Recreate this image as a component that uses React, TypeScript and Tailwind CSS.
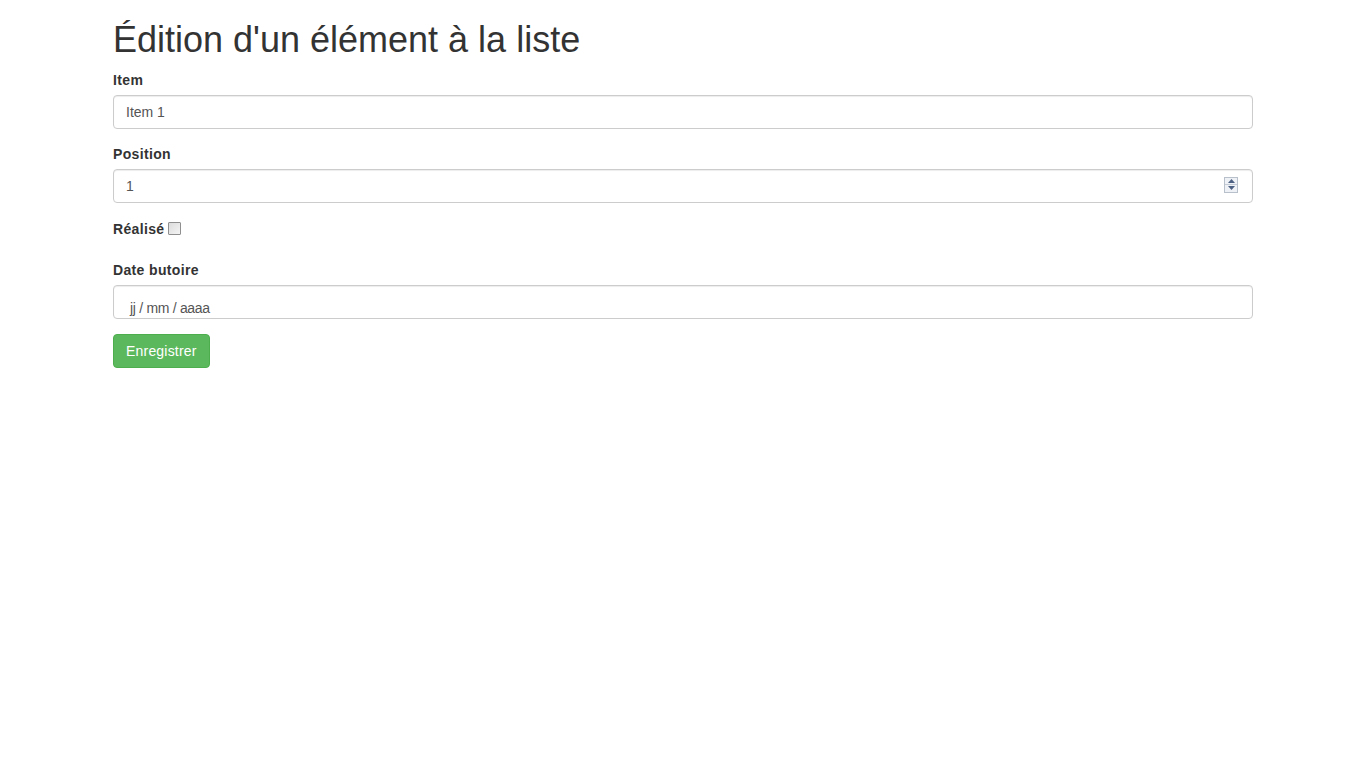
const FONT = "font-['Liberation_Sans',Arial,sans-serif]"

const inputCls =
  'block w-full h-[34px] px-3 py-[6px] text-[14px] leading-[20px] text-[#555] bg-white border border-[#ccc] rounded-[4px] shadow-[inset_0_1px_1px_rgba(0,0,0,0.075)] outline-none'

const labelCls = 'inline-block font-bold mb-[5px] tracking-[0.35px]'

function Spinner() {
  return (
    <div className="absolute right-[15px] top-[8px] w-[14px] h-[16px] flex flex-col border border-[#b8c0cc] bg-[#eef1f5]">
      <div className="flex-1 flex items-center justify-center border-b border-[#c6ccd6]">
        <svg width="7" height="4" viewBox="0 0 7 4">
          <path d="M0 4 L3.5 0 L7 4 Z" fill="#4d6185" />
        </svg>
      </div>
      <div className="flex-1 flex items-center justify-center">
        <svg width="7" height="4" viewBox="0 0 7 4">
          <path d="M0 0 L3.5 4 L7 0 Z" fill="#4d6185" />
        </svg>
      </div>
    </div>
  )
}

export default function App() {
  return (
    <div className={`${FONT} bg-white min-h-screen text-[14px] leading-[20px] text-[#333]`}>
      <div className="w-[1170px] mx-auto px-[15px]">
        <h1 className="text-[36px] leading-[1.1] font-normal mt-5 mb-[10px]">Édition d'un élément à la liste</h1>
        <form onSubmit={(e) => e.preventDefault()}>
          <div className="mb-[15px]">
            <label className={labelCls}>Item</label>
            <input className={inputCls} defaultValue="Item 1" />
          </div>
          <div className="mb-[15px]">
            <label className={labelCls}>Position</label>
            <div className="relative">
              <input className={inputCls} defaultValue="1" />
              <Spinner />
            </div>
          </div>
          <div className="mb-[16px] pt-px">
            <label className="inline-flex items-center font-bold mb-[5px] tracking-[0.35px]">
              Réalisé
              <span className="ml-1 inline-block w-[13px] h-[13px] border border-[#8f8f8f] bg-gradient-to-br from-[#dcdcdc] to-[#f4f4f4] rounded-[1px]" />
            </label>
          </div>
          <div className="mb-[15px]">
            <label className={labelCls}>Date butoire</label>
            <div className="w-full h-[34px] pl-[16px] pt-[13px] text-[14px] leading-[18px] text-[#555] bg-white border border-[#ccc] rounded-[4px] shadow-[inset_0_1px_1px_rgba(0,0,0,0.075)] overflow-hidden tracking-[-0.3px]">
              jj / mm / aaaa
            </div>
          </div>
          <button
            type="submit"
            className="inline-block px-3 py-[6px] text-[14px] leading-[20px] tracking-[0.2px] text-white bg-[#5cb85c] border border-[#4cae4c] rounded-[4px]"
          >
            Enregistrer
          </button>
        </form>
      </div>
    </div>
  )
}
